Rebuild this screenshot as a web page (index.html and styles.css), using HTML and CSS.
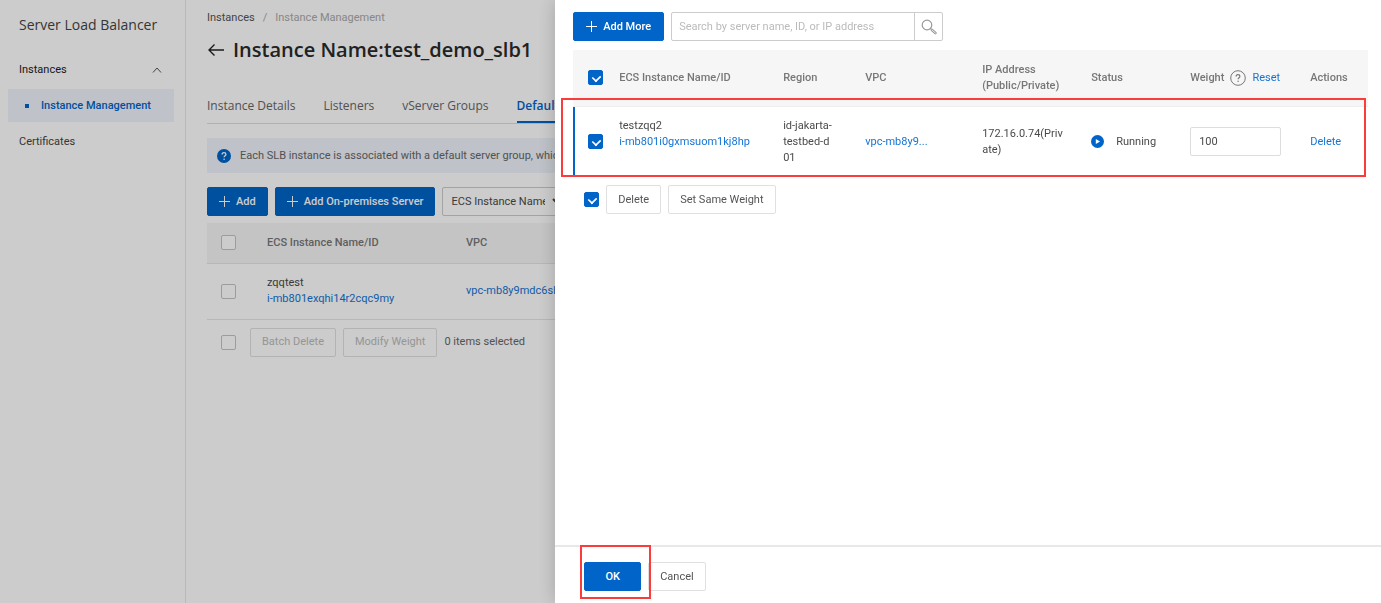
FILE: index.html
```
<!DOCTYPE html>
<html lang="en">
	<head>
		<title>Server Load Balancer</title>
		<meta charset="utf-8">
		<meta name="viewport" content="width=device-width, initial-scale=1">
		<link rel="stylesheet" href="styles.css">
	</head>
	<body>
		<div class="page">
			<nav class="sidebar">
				<div class="product">Server Load Balancer</div>
				<button class="nav-group" type="button">
					Instances
					<svg width="10" height="6" viewBox="0 0 10 6" fill="none" stroke="#555"><path d="M1 5.5 5 1l4 4.5"/></svg>
				</button>
				<a class="nav-item active" href="#">Instance Management</a>
				<a class="nav-item" href="#">Certificates</a>
			</nav>
			<main class="main">
				<div class="breadcrumb">
					<a href="#">Instances</a>
					<span class="slash">/</span>
					<span class="current">Instance Management</span>
				</div>
				<div class="title">
					<a href="#" aria-label="Back"><svg width="18" height="16" viewBox="0 0 18 16" fill="none" stroke="#222" stroke-width="1.4"><path d="M17 8H2M7.5 2.5 2 8l5.5 5.5"/></svg></a>
					<h1>Instance Name:test_demo_slb1</h1>
				</div>
				<div class="tabs">
					<a href="#">Instance Details</a>
					<a href="#">Listeners</a>
					<a href="#">vServer Groups</a>
					<a class="active" href="#">Default Server Group</a>
				</div>
				<div class="notice">
					<svg width="14" height="14" viewBox="0 0 14 14"><circle cx="7" cy="7" r="7" fill="#0064c8"/><path d="M5.1 5.6c0-1.2.8-1.9 1.9-1.9s1.9.7 1.9 1.7c0 1.4-1.8 1.4-1.8 2.9" fill="none" stroke="#fff" stroke-width="1.3"/><circle cx="7.1" cy="10.2" r=".8" fill="#fff"/></svg>
					<span>Each SLB instance is associated with a default server group, which</span>
				</div>
				<div class="toolbar">
					<button class="btn primary" type="button"><svg width="11" height="11" viewBox="0 0 11 11" stroke="#fff"><path d="M5.5 0v11M0 5.5h11"/></svg>Add</button>
					<button class="btn primary" type="button"><svg width="11" height="11" viewBox="0 0 11 11" stroke="#fff"><path d="M5.5 0v11M0 5.5h11"/></svg>Add On-premises Server</button>
					<select class="filter" aria-label="Filter by">
						<option>ECS Instance Name</option>
					</select>
				</div>
				<table class="servers">
					<colgroup>
						<col class="col-check">
						<col class="col-server">
						<col>
					</colgroup>
					<thead>
						<tr>
							<th><input type="checkbox" aria-label="Select all"></th>
							<th>ECS Instance Name/ID</th>
							<th>VPC</th>
						</tr>
					</thead>
					<tbody>
						<tr>
							<td><input type="checkbox" aria-label="Select zqqtest"></td>
							<td>zqqtest<br><a href="#">i-mb801exqhi14r2cqc9my</a></td>
							<td><a href="#">vpc-mb8y9mdc6sb</a></td>
						</tr>
					</tbody>
				</table>
				<div class="batch">
					<input type="checkbox" aria-label="Select page">
					<button class="btn" type="button" disabled>Batch Delete</button>
					<button class="btn" type="button" disabled>Modify Weight</button>
					<span>0 items selected</span>
				</div>
			</main>
		</div>

		<div class="backdrop"></div>

		<aside class="drawer">
			<div class="drawer-body">
				<div class="toolbar">
					<button class="btn primary" type="button"><svg width="11" height="11" viewBox="0 0 11 11" stroke="#fff"><path d="M5.5 0v11M0 5.5h11"/></svg>Add More</button>
					<form class="search">
						<input type="text" aria-label="Search" placeholder="Search by server name, ID, or IP address">
						<button type="button" aria-label="Search"><svg width="16" height="16" viewBox="0 0 16 16" fill="none" stroke="#999"><circle cx="6" cy="6" r="4.8" stroke-width="1.2"/><path d="m9.5 9.5 1.5 1.5" stroke-width="1.2"/><path d="m11 11 3.4 3" stroke-width="2.6" stroke-linecap="round"/><path d="m11 11 3.4 3" stroke="#fff" stroke-width=".8" stroke-linecap="round"/></svg></button>
					</form>
				</div>
				<div class="marked-list">
					<table class="picked">
						<colgroup>
							<col class="c-check">
							<col class="c-name">
							<col class="c-region">
							<col class="c-vpc">
							<col class="c-ip">
							<col class="c-status">
							<col class="c-weight">
							<col>
						</colgroup>
						<thead>
							<tr>
								<th><input type="checkbox" aria-label="Select all servers" checked></th>
								<th>ECS Instance Name/ID</th>
								<th>Region</th>
								<th>VPC</th>
								<th>IP Address<br>(Public/Private)</th>
								<th>Status</th>
								<th>
									<div class="weight-head">
										Weight
										<svg width="16" height="16" viewBox="0 0 16 16" fill="none" stroke="#777"><circle cx="8" cy="8" r="7.3"/><path d="M6.1 6.5c0-1.2.8-1.9 1.9-1.9s1.9.7 1.9 1.7c0 1.4-1.8 1.4-1.8 3" stroke-width="1.2"/><circle cx="8.1" cy="11.2" r=".7" fill="#777" stroke="none"/></svg>
										<a href="#">Reset</a>
									</div>
								</th>
								<th>Actions</th>
							</tr>
						</thead>
						<tbody>
							<tr>
								<td><input type="checkbox" aria-label="Select testzqq2" checked></td>
								<td class="name">testzqq2<br><a href="#">i-mb801i0gxmsuom1kj8hp</a></td>
								<td>id-jakarta-<br>testbed-d<br>01</td>
								<td><a href="#">vpc-mb8y9...</a></td>
								<td>172.16.0.74(Priv<br>ate)</td>
								<td>
									<div class="status">
										<svg width="13" height="13" viewBox="0 0 13 13"><circle cx="6.5" cy="6.5" r="6.5" fill="#0064c8"/><path d="M4.8 4v5l4.2-2.5z" fill="#fff"/></svg>
										Running
									</div>
								</td>
								<td><input class="weight" type="text" aria-label="Weight" value="100"></td>
								<td><a href="#">Delete</a></td>
							</tr>
						</tbody>
					</table>
					<div class="mark mark-row"></div>
				</div>
				<div class="batch">
					<input type="checkbox" aria-label="Select listed servers" checked>
					<button class="btn" type="button">Delete</button>
					<button class="btn" type="button">Set Same Weight</button>
				</div>
			</div>
			<footer class="drawer-footer">
				<div class="marked-ok">
					<button class="btn primary ok" type="button">OK</button>
					<div class="mark mark-ok"></div>
				</div>
				<button class="btn" type="button">Cancel</button>
			</footer>
		</aside>
	</body>
</html>
```

FILE: styles.css
```
*{
	box-sizing: border-box;
}
body{
	margin: 0;
	overflow: hidden;
	font-family: Roboto, 'Open Sans', sans-serif;
	font-size: 11px;
	line-height: 16px;
	color: #4a4a4a;
	background-color: #fff;
}
a{
	color: #1474d4;
	text-decoration: none;
}
svg{
	flex: none;
}
button, input, select{
	font: inherit;
	color: inherit;
}
.page{
	display: flex;
	height: 100vh;
}

/* sidebar */
.sidebar{
	flex: none;
	width: 186px;
	padding: 14px 11px 0 8px;
	border-right: 1px solid #e8e8e8;
}
.product{
	padding-left: 11px;
	font-family: 'Open Sans', sans-serif;
	font-size: 14px;
	line-height: 22px;
	color: #444;
}
.nav-group{
	display: flex;
	align-items: center;
	justify-content: space-between;
	width: 100%;
	height: 33px;
	margin-top: 17px;
	padding: 0 12px 0 11px;
	border: 0;
	background: none;
	color: #222;
}
.nav-item{
	display: flex;
	align-items: center;
	height: 33px;
	margin-top: 3px;
	padding-left: 11px;
	color: #444;
}
.nav-item.active{
	padding-left: 17px;
	background-color: #eff3fa;
	color: #0064c8;
	font-weight: 500;
}
.nav-item.active::before{
	content: "";
	width: 4px;
	height: 4px;
	margin-right: 12px;
	background-color: #0064c8;
}

/* main column */
.main{
	flex: 1;
	min-width: 0;
	padding: 10px 20px 0 21px;
}
.breadcrumb{
	display: flex;
	gap: 8px;
}
.breadcrumb a{
	color: #555;
}
.breadcrumb .slash, .breadcrumb .current{
	color: #aaa;
}
.title{
	display: flex;
	align-items: center;
	gap: 8px;
	margin-top: 8px;
}
.title a{
	display: flex;
}
h1{
	margin: 0;
	font-family: 'Open Sans', sans-serif;
	font-size: 20px;
	line-height: 32px;
	font-weight: 600;
	color: #2a2a2a;
}
.tabs{
	display: flex;
	gap: 28px;
	margin-top: 23px;
	border-bottom: 1px solid #ddd;
	font-family: 'Open Sans', sans-serif;
	font-size: 12px;
}
.tabs a{
	height: 34px;
	padding-top: 9px;
	color: #666;
	white-space: nowrap;
}
.tabs .active{
	color: #0064c8;
	font-weight: 600;
	border-bottom: 2px solid #0064c8;
}
.notice{
	display: flex;
	align-items: center;
	gap: 9px;
	height: 35px;
	margin: 14px 0;
	padding: 0 10px;
	background-color: #eff3fa;
	color: #666;
}
.toolbar{
	display: flex;
	gap: 7px;
}
.btn{
	display: flex;
	align-items: center;
	gap: 6px;
	height: 29px;
	padding: 0 11px;
	border: 1px solid #e0e0e0;
	border-radius: 2px;
	background-color: #fff;
	color: #555;
	white-space: nowrap;
}
.btn.primary{
	padding: 0 12px;
	border-color: #0064c8;
	background-color: #0064c8;
	color: #fff;
	font-weight: 500;
}
.main .btn.primary{
	padding: 0 11px;
}
.btn:disabled{
	color: #bbb;
	background: none;
}
.filter{
	width: 124px;
	height: 29px;
	padding: 0 4px;
	border: 1px solid #ccc;
	border-radius: 2px;
	background-color: #fff;
}

input[type=checkbox]{
	appearance: none;
	display: block;
	flex: none;
	position: relative;
	width: 15px;
	height: 15px;
	margin: 0;
	border: 1px solid #c4c4c4;
	border-radius: 2px;
	background-color: #fff;
}
input[type=checkbox]:checked{
	border-color: #0064c8;
	background-color: #0064c8;
}
input[type=checkbox]:checked::after{
	content: "";
	position: absolute;
	left: 3px;
	top: 3px;
	width: 7px;
	height: 5px;
	border: solid #fff;
	border-width: 0 0 2px 2px;
	transform: rotate(-45deg) scale(0.85);
}

/* tables */
table{
	width: 100%;
	table-layout: fixed;
	border-collapse: collapse;
}
th, td{
	padding: 0 0 0 12px;
	text-align: left;
	white-space: nowrap;
}
th{
	background-color: #f6f6f6;
	color: #777;
	font-weight: 500;
}
.servers{
	margin-top: 7px;
}
.servers tr{
	height: 56px;
	border-bottom: 1px solid #e5e5e5;
}
.servers thead tr{
	height: 40px;
}
.servers th:first-child, .servers td:first-child{
	padding-left: 14px;
}
.col-check{
	width: 48px;
}
.col-server{
	width: 199px;
}
.batch{
	display: flex;
	align-items: center;
	gap: 7px;
}
.main .batch{
	padding: 8px 0 0 14px;
	color: #666;
}
.main .batch input{
	margin-right: 7px;
}

/* drawer */
.backdrop{
	position: fixed;
	inset: 0;
	background-color: rgba(0, 0, 0, 0.2);
}
.drawer{
	position: fixed;
	top: 0;
	right: 0;
	bottom: 0;
	width: 59.8%;
	display: flex;
	flex-direction: column;
	background-color: #fff;
	box-shadow: 0 0 18px rgba(0, 0, 0, 0.2);
}
.drawer-body{
	flex: 1;
	padding: 12px 13px 0 18px;
}
.search{
	display: flex;
	width: 272px;
	height: 29px;
	border: 1px solid #ccc;
	border-radius: 2px;
}
.search input{
	flex: 1;
	min-width: 0;
	padding: 0 7px;
	border: 0;
	background: none;
}
.search input::placeholder{
	color: #bbb;
}
.search button{
	display: flex;
	align-items: center;
	justify-content: center;
	width: 28px;
	padding: 0;
	border: 0;
	border-left: 1px solid #ccc;
	background: none;
}
.marked-list, .marked-ok{
	position: relative;
}
.marked-list{
	margin-top: 9px;
}
.picked thead tr{
	height: 56px;
	border-bottom: 1px solid #eee;
}
.picked tbody tr{
	height: 71px;
}
.picked th:first-child, .picked td:first-child{
	padding-left: 15px;
}
.picked td:first-child{
	box-shadow: inset 2px 0 #0064c8;
}
.picked .name{
	padding-bottom: 16px;
}
.c-check{
	width: 34px;
}
.c-name{
	width: 164px;
}
.c-region{
	width: 82px;
}
.c-vpc{
	width: 117px;
}
.c-ip{
	width: 109px;
}
.c-status{
	width: 99px;
}
.c-weight{
	width: 120px;
}
.weight-head{
	display: flex;
	align-items: center;
	gap: 6px;
}
.weight-head a{
	font-weight: 400;
}
.status{
	display: flex;
	align-items: center;
	gap: 12px;
}
.weight{
	display: block;
	width: 91px;
	height: 29px;
	padding: 0 8px;
	border: 1px solid #ddd;
	border-radius: 2px;
}
.drawer .batch{
	padding: 8px 0 0 11px;
}
.drawer-footer{
	display: flex;
	align-items: center;
	gap: 7px;
	height: 58px;
	padding: 3px 29px 0;
	border-top: 2px solid #e8e8e8;
}
.ok{
	justify-content: center;
	width: 57px;
}

/* red highlight frames */
.mark{
	position: absolute;
	border: 2px solid #fa3c3c;
	pointer-events: none;
}
.mark-row{
	top: 48px;
	right: 2px;
	bottom: 0;
	left: -12px;
}
.mark-ok{
	top: -17px;
	right: -10px;
	bottom: -8px;
	left: -4px;
}
```
